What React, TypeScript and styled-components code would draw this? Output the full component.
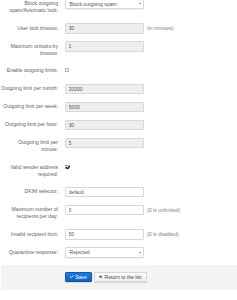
import React from "react";
import styled, { createGlobalStyle } from "styled-components";

const GlobalStyle = createGlobalStyle`
  html, body { margin: 0; padding: 0; background: #fff; }
  body {
    font-family: "Liberation Sans", Arial, sans-serif;
    font-size: 5.1px;
    color: #555;
    overflow: hidden;
  }
`;

const Page = styled.div`
  width: 237px;
  padding-top: 0;
  margin-top: -1.5px;
`;

const Form = styled.div`
  display: flex;
  flex-direction: column;
  gap: 7.5px;
`;

const Row = styled.div`
  display: flex;
  align-items: flex-start;
`;

const Label = styled.div`
  width: 58px;
  flex: none;
  text-align: right;
  white-space: nowrap;
  line-height: 7px;
  padding: 1.75px 0 1.25px;
  color: #606060;
`;

const Control = styled.div`
  margin-left: 7px;
  display: flex;
  align-items: center;
  height: 10.5px;
`;

const TextInput = styled.input<{ $disabled?: boolean }>`
  box-sizing: border-box;
  width: 79px;
  height: 10.5px;
  margin: 0;
  padding: 0 0 0 2.5px;
  border: 1px solid #d8d8d8;
  border-radius: 1px;
  background: ${(p) => (p.$disabled ? "#eeeeee" : "#ffffff")};
  font-family: inherit;
  font-size: 5.1px;
  color: #555;
  outline: none;
`;

const Select = styled.div`
  box-sizing: border-box;
  width: 79px;
  height: 10.5px;
  display: flex;
  align-items: center;
  justify-content: space-between;
  padding: 0 2.5px 0 3.5px;
  border: 1px solid #d8d8d8;
  border-radius: 1px;
  background: #fff;
  box-shadow: 0 0.5px 1px rgba(0, 0, 0, 0.06);
  color: #555;
`;

const Caret = styled.span`
  width: 0;
  height: 0;
  border-left: 1.2px solid transparent;
  border-right: 1.2px solid transparent;
  border-top: 1.8px solid #222;
`;

const Hint = styled.span`
  margin-left: 3px;
  color: #808080;
  white-space: nowrap;
`;

const CheckBox = styled.span<{ $checked?: boolean }>`
  position: relative;
  box-sizing: border-box;
  width: 4px;
  height: 4px;
  margin-top: -1px;
  border: 0.6px solid ${(p) => (p.$checked ? "#999" : "#b8b8b8")};
  border-radius: 0.6px;
  background: ${(p) => (p.$checked ? "#fff" : "#f2f2f2")};
  svg {
    position: absolute;
    left: -0.4px;
    top: -0.8px;
    display: block;
  }
`;

const Footer = styled.div`
  margin-top: 7px;
  margin-left: 1px;
  height: 25px;
  box-sizing: border-box;
  padding: 7.3px 0 0 64px;
  background: #f4f4f4;
  display: flex;
  gap: 2.3px;
`;

const Button = styled.div<{ $primary?: boolean; $w: number }>`
  box-sizing: border-box;
  width: ${(p) => p.$w}px;
  height: 10.4px;
  display: flex;
  align-items: center;
  justify-content: center;
  gap: 1.5px;
  border-radius: 1px;
  border: 0.6px solid ${(p) => (p.$primary ? "#0c56b0" : "#d6d6d6")};
  background: ${(p) =>
    p.$primary ? "linear-gradient(#2479d8, #0f62c6)" : "linear-gradient(#fdfdfd, #f1f1f1)"};
  color: ${(p) => (p.$primary ? "#fff" : "#444")};
  box-shadow: 0 0.5px 1px rgba(0, 0, 0, 0.12);
  white-space: nowrap;
`;

type Field =
  | { kind: "select"; label: string[]; value: string }
  | { kind: "input"; label: string[]; value: string; disabled?: boolean; hint?: string }
  | { kind: "check"; label: string[]; checked: boolean };

const fields: Field[] = [
  { kind: "select", label: ["Block outgoing", "spam/Automatic lock:"], value: "Block outgoing spam" },
  { kind: "input", label: ["User lock timeout:"], value: "30", disabled: true, hint: "(in minutes)" },
  { kind: "input", label: ["Maximum unlocks by", "timeout:"], value: "1", disabled: true },
  { kind: "check", label: ["Enable outgoing limits:"], checked: false },
  { kind: "input", label: ["Outgoing limit per month:"], value: "20000", disabled: true },
  { kind: "input", label: ["Outgoing limit per week:"], value: "5000", disabled: true },
  { kind: "input", label: ["Outgoing limit per hour:"], value: "30", disabled: true },
  { kind: "input", label: ["Outgoing limit per", "minute:"], value: "5", disabled: true },
  { kind: "check", label: ["Valid sender address", "required:"], checked: true },
  { kind: "input", label: ["DKIM selector:"], value: "default" },
  { kind: "input", label: ["Maximum number of", "recipients per day:"], value: "0", hint: "(0 is unlimited)" },
  { kind: "input", label: ["Invalid recipient limit:"], value: "50", hint: "(0 is disabled)" },
  { kind: "select", label: ["Quarantine response:"], value: "Rejected" },
];

const CheckMark = ({ color, size, stroke = 2.4 }: { color: string; size: number; stroke?: number }) => (
  <svg width={size} height={size} viewBox="0 0 10 10">
    <path d="M1 5.2 L3.8 8 L9 2.2" fill="none" stroke={color} strokeWidth={stroke} strokeLinecap="round" strokeLinejoin="round" />
  </svg>
);

const ArrowLeft = () => (
  <svg width="3.6" height="3.6" viewBox="0 0 10 10">
    <path d="M9 5 H2 M5 1.5 L1.5 5 L5 8.5" fill="none" stroke="#333" strokeWidth="2.2" strokeLinecap="round" strokeLinejoin="round" />
  </svg>
);

const LabelText = ({ lines }: { lines: string[] }) => (
  <Label>
    {lines.map((l, i) => (
      <React.Fragment key={i}>
        {i > 0 && <br />}
        {l}
      </React.Fragment>
    ))}
  </Label>
);

export default function App() {
  return (
    <Page>
      <GlobalStyle />
      <Form>
        {fields.map((f, i) => (
          <Row key={i}>
            <LabelText lines={f.label} />
            <Control>
              {f.kind === "select" && (
                <Select>
                  <span>{f.value}</span>
                  <Caret />
                </Select>
              )}
              {f.kind === "input" && (
                <>
                  <TextInput readOnly value={f.value} $disabled={f.disabled} />
                  {f.hint && <Hint>{f.hint}</Hint>}
                </>
              )}
              {f.kind === "check" && (
                <CheckBox $checked={f.checked}>
                  {f.checked && <CheckMark color="#1a1a1a" size={4.6} stroke={2.8} />}
                </CheckBox>
              )}
            </Control>
          </Row>
        ))}
      </Form>
      <Footer>
        <Button $primary $w={27}>
          <CheckMark color="#fff" size={3.4} />
          <span>Save</span>
        </Button>
        <Button $w={52.4}>
          <ArrowLeft />
          <span>Return to the list</span>
        </Button>
      </Footer>
    </Page>
  );
}
